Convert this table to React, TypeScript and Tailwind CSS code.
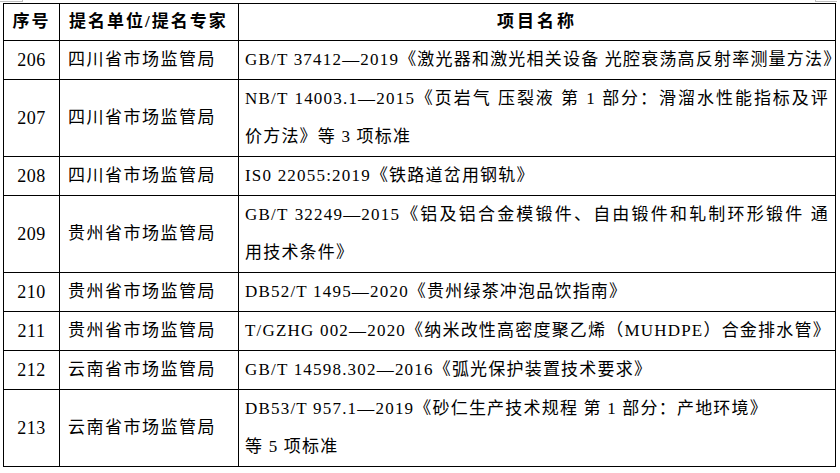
const font = "font-['Liberation_Serif','Noto_Sans_CJK_SC',serif]";

type Row = { no: string; unit: string; lines: { text: string; full?: boolean }[] };

const rows: Row[] = [
  {
    no: "206",
    unit: "四川省市场监管局",
    lines: [{ text: "GB/T 37412—2019《激光器和激光相关设备 光腔衰荡高反射率测量方法》", full: true }],
  },
  {
    no: "207",
    unit: "四川省市场监管局",
    lines: [
      { text: "NB/T 14003.1—2015《页岩气 压裂液 第 1 部分：滑溜水性能指标及评", full: true },
      { text: "价方法》等 3 项标准" },
    ],
  },
  { no: "208", unit: "四川省市场监管局", lines: [{ text: "IS0 22055:2019《铁路道岔用钢轨》" }] },
  {
    no: "209",
    unit: "贵州省市场监管局",
    lines: [
      { text: "GB/T 32249—2015《铝及铝合金模锻件、自由锻件和轧制环形锻件 通", full: true },
      { text: "用技术条件》" },
    ],
  },
  { no: "210", unit: "贵州省市场监管局", lines: [{ text: "DB52/T 1495—2020《贵州绿茶冲泡品饮指南》" }] },
  {
    no: "211",
    unit: "贵州省市场监管局",
    lines: [{ text: "T/GZHG 002—2020《纳米改性高密度聚乙烯（MUHDPE）合金排水管》", full: true }],
  },
  { no: "212", unit: "云南省市场监管局", lines: [{ text: "GB/T 14598.302—2016《弧光保护装置技术要求》" }] },
  {
    no: "213",
    unit: "云南省市场监管局",
    lines: [{ text: "DB53/T 957.1—2019《砂仁生产技术规程 第 1 部分：产地环境》" }, { text: "等 5 项标准" }],
  },
];

export default function App() {
  return (
    <div className={`relative h-[473px] w-[840px] bg-white pl-[3px] pt-[3px] text-black ${font}`}>
      {/* page corner marks */}
      <div className="absolute left-0 top-[1px] h-[1px] w-[22px] bg-[#bdbdbd]" />
      <div className="absolute left-[22px] top-0 h-[2px] w-[1px] bg-[#bdbdbd]" />
      <div className="absolute left-[815px] top-[1px] h-[1px] w-[22px] bg-[#bdbdbd]" />
      <div className="absolute left-[815px] top-0 h-[2px] w-[1px] bg-[#bdbdbd]" />

      <table className="w-[833px] table-fixed border-collapse text-[17px]">
        <colgroup>
          <col className="w-[56px]" />
          <col className="w-[179px]" />
          <col />
        </colgroup>
        <thead>
          <tr className="h-[37px] font-bold">
            <th className="border border-black text-center leading-[36px] tracking-[2px]">序号</th>
            <th className="border border-black pl-[9px] text-left leading-[36px] tracking-[2px]">提名单位/提名专家</th>
            <th className="border border-black text-center leading-[36px] tracking-[3px]">项目名称</th>
          </tr>
        </thead>
        <tbody>
          {rows.map((r) => (
            <tr key={r.no}>
              <td className="border border-black text-center align-middle text-[18px] leading-[38px] tracking-[0.5px]">
                {r.no}
              </td>
              <td className="border border-black pl-[8px] align-middle leading-[38px] tracking-[1.5px] whitespace-nowrap">
                {r.unit}
              </td>
              <td className="border border-black pl-[6px] pr-[6px] align-middle leading-[38px] tracking-[1.2px]">
                {r.lines.map((l, i) => (
                  <div
                    key={i}
                    className={l.full ? "whitespace-nowrap text-justify [text-align-last:justify]" : "whitespace-nowrap"}
                  >
                    {l.text}
                  </div>
                ))}
              </td>
            </tr>
          ))}
        </tbody>
      </table>
    </div>
  );
}
